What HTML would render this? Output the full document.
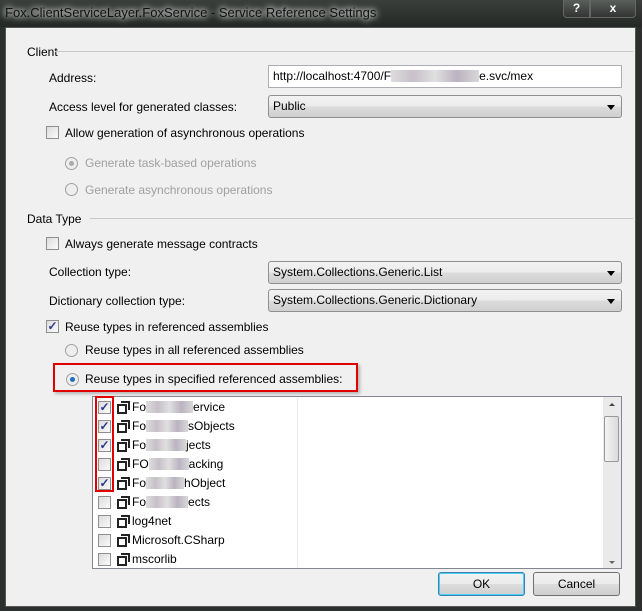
<!DOCTYPE html>
<html><head><style>
*{margin:0;padding:0;box-sizing:border-box}
body{width:642px;height:611px;overflow:hidden;background:#2b302c;font:12px "Liberation Sans",sans-serif;color:#000;position:relative}
.a{position:absolute;white-space:nowrap}
.title{left:0;top:0;width:642px;height:27px;background:linear-gradient(#3a3f3b,#232824);}
.tt{left:5px;top:5px;color:#111;font-size:13px;text-shadow:0 0 6px #fff,0 0 8px #fff}
.client{left:5px;top:27px;width:631px;height:580px;background:#f0f0f0;border:1px solid #555}
.lbl{line-height:14px}
.line{height:1px;background:#c8c8c8}
.inp{background:#fff;border:1px solid #abadb3;height:23px;padding:3px 4px}
.sel{border:1px solid #8e8f8f;border-radius:3px;height:23px;padding:3px 4px;background:linear-gradient(#f2f2f2,#ebebeb 50%,#dcdcdc 50%,#cfcfcf)}
.sel:after{content:"";position:absolute;right:6px;top:9px;border:4px solid transparent;border-top:5px solid #000;border-bottom:0}
.cb{width:13px;height:13px;border:1px solid #8e8f8f;background:linear-gradient(135deg,#dcdcdc,#fafafa)}
.ck{color:#2a3a8a;font-size:12px;line-height:11px;text-align:center;font-weight:bold}
.rb{width:13px;height:13px;border:1px solid #a0a0a0;border-radius:50%;background:#eee}
.dot:after{content:"";position:absolute;left:3px;top:3px;width:5px;height:5px;border-radius:50%;background:#1c6fb8}
.gdot:after{content:"";position:absolute;left:3px;top:3px;width:5px;height:5px;border-radius:50%;background:#aaa}
.gray{color:#a0a0a0}
.ic{width:12px;height:12px}
.ic:before{content:"";position:absolute;left:0;top:3px;width:6px;height:6px;border:2px solid #222}
.ic:after{content:"";position:absolute;left:4px;top:0;width:7px;height:7px;border-top:2px solid #222;border-right:2px solid #222}
.blur{display:inline-block;height:12px;vertical-align:-2px;background:linear-gradient(90deg,#ddd,#c8bfc9,#e0e0e0,#bbb3c0,#d8d8d8)}
.btn{border:1px solid #707070;border-radius:3px;height:24px;background:linear-gradient(#f2f2f2,#ebebeb 50%,#dddddd 50%,#cfcfcf);text-align:center;line-height:22px}
.red{border:2px solid #e00000}
</style></head><body>
<div class="a title"></div>
<div class="a tt">Fox.ClientServiceLayer.FoxService - Service Reference Settings</div>
<div class="a" style="left:563px;top:0;width:27px;height:18px;border:1px solid #666;border-top:0;border-radius:0 0 0 4px;background:linear-gradient(#5a5f5b,#333);color:#fff;text-align:center;font-weight:bold;line-height:17px">?</div>
<div class="a" style="left:590px;top:0;width:46px;height:18px;border:1px solid #666;border-top:0;border-radius:0 0 4px 0;background:linear-gradient(#5a5f5b,#333);color:#fff;text-align:center;font-weight:bold;line-height:17px">x</div>
<div class="a client"></div>

<div class="a lbl" style="left:27px;top:45px">Client</div>
<div class="a line" style="left:55px;top:51px;width:578px"></div>
<div class="a lbl" style="left:49px;top:71px">Address:</div>
<div class="a inp" style="left:268px;top:65px;width:354px">http://localhost:4700/F<span class="blur" style="width:88px"></span>e.svc/mex</div>
<div class="a lbl" style="left:49px;top:100px">Access level for generated classes:</div>
<div class="a sel" style="left:268px;top:95px;width:354px">Public</div>
<div class="a cb" style="left:46px;top:126px"></div>
<div class="a lbl" style="left:65px;top:126px">Allow generation of asynchronous operations</div>
<div class="a rb gdot" style="left:65px;top:157px"></div>
<div class="a lbl gray" style="left:85px;top:156px">Generate task-based operations</div>
<div class="a rb" style="left:65px;top:183px"></div>
<div class="a lbl gray" style="left:85px;top:183px">Generate asynchronous operations</div>

<div class="a lbl" style="left:27px;top:212px">Data Type</div>
<div class="a line" style="left:90px;top:218px;width:543px"></div>
<div class="a cb" style="left:46px;top:237px"></div>
<div class="a lbl" style="left:65px;top:237px">Always generate message contracts</div>
<div class="a lbl" style="left:49px;top:265px">Collection type:</div>
<div class="a sel" style="left:268px;top:261px;width:354px">System.Collections.Generic.List</div>
<div class="a lbl" style="left:49px;top:294px">Dictionary collection type:</div>
<div class="a sel" style="left:268px;top:289px;width:354px">System.Collections.Generic.Dictionary</div>
<div class="a cb ck" style="left:46px;top:320px">✓</div>
<div class="a lbl" style="left:65px;top:320px">Reuse types in referenced assemblies</div>
<div class="a rb" style="left:65px;top:344px"></div>
<div class="a lbl" style="left:85px;top:343px">Reuse types in all referenced assemblies</div>
<div class="a red" style="left:53px;top:363px;width:305px;height:29px;box-shadow:2px 2px 3px rgba(0,0,0,.25)"></div>
<div class="a rb dot" style="left:66px;top:373px"></div>
<div class="a lbl" style="left:85px;top:372px">Reuse types in specified referenced assemblies:</div>

<div class="a" style="left:92px;top:396px;width:530px;height:173px;background:#fff;border:1px solid #828790"></div>
<div class="a" style="left:297px;top:398px;width:1px;height:169px;background:#e6eaf2"></div>
<div class="a" style="left:603px;top:397px;width:18px;height:171px;background:#eaeaea"></div>
<div class="a" style="left:604px;top:416px;width:15px;height:46px;border:1px solid #999;border-radius:2px;background:linear-gradient(90deg,#f4f4f4,#dadada)"></div>
<div class="a" style="left:609px;top:403px;border:3px solid transparent;border-bottom:3px solid #444;border-top:0"></div>
<div class="a" style="left:609px;top:561px;border:3px solid transparent;border-top:3px solid #666;border-bottom:0"></div>

<div class="a cb ck" style="left:98px;top:401px">✓</div><div class="a ic" style="left:117px;top:401px"></div><div class="a" style="left:132px;top:400px">Fo<span class="blur" style="width:47px"></span>ervice</div>
<div class="a cb ck" style="left:98px;top:420px">✓</div><div class="a ic" style="left:117px;top:420px"></div><div class="a" style="left:132px;top:419px">Fo<span class="blur" style="width:42px"></span>sObjects</div>
<div class="a cb ck" style="left:98px;top:439px">✓</div><div class="a ic" style="left:117px;top:439px"></div><div class="a" style="left:132px;top:438px">Fo<span class="blur" style="width:40px"></span>jects</div>
<div class="a cb" style="left:98px;top:458px"></div><div class="a ic" style="left:117px;top:458px"></div><div class="a" style="left:132px;top:457px">FO<span class="blur" style="width:40px"></span>acking</div>
<div class="a cb ck" style="left:98px;top:477px">✓</div><div class="a ic" style="left:117px;top:477px"></div><div class="a" style="left:132px;top:476px">Fo<span class="blur" style="width:38px"></span>hObject</div>
<div class="a cb" style="left:98px;top:496px"></div><div class="a ic" style="left:117px;top:496px"></div><div class="a" style="left:132px;top:495px">Fo<span class="blur" style="width:42px"></span>ects</div>
<div class="a cb" style="left:98px;top:515px"></div><div class="a ic" style="left:117px;top:515px"></div><div class="a" style="left:132px;top:514px">log4net</div>
<div class="a cb" style="left:98px;top:534px"></div><div class="a ic" style="left:117px;top:534px"></div><div class="a" style="left:132px;top:533px">Microsoft.CSharp</div>
<div class="a cb" style="left:98px;top:553px"></div><div class="a ic" style="left:117px;top:553px"></div><div class="a" style="left:132px;top:552px">mscorlib</div>
<div class="a red" style="left:95px;top:396px;width:19px;height:96px"></div>

<div class="a" style="left:434px;top:569px;width:190px;height:30px;background:#f0f0f0"></div>
<div class="a btn" style="left:438px;top:572px;width:87px;border-color:#3c7fb1;box-shadow:inset 0 0 0 1px #48d0f8">OK</div>
<div class="a btn" style="left:533px;top:572px;width:87px">Cancel</div>
</body></html>
